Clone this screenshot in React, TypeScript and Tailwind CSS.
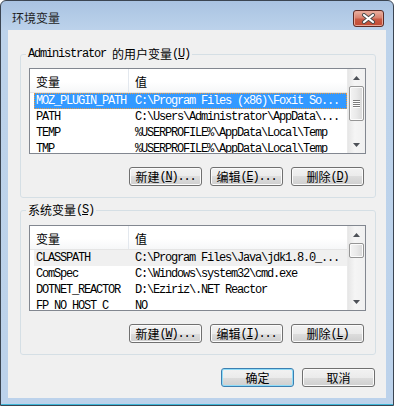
import React from 'react';

const MONO = "font-['Liberation_Mono',monospace] text-[12px] tracking-[-1.2px]";
const CJK = "font-['Noto_Sans_CJK_SC',sans-serif] text-[12px]";

type Row = { name: string; value: string; state?: 'active' | 'inactive' };

const userVars: Row[] = [
  { name: 'MOZ_PLUGIN_PATH', value: 'C:\\Program Files (x86)\\Foxit So...', state: 'active' },
  { name: 'PATH', value: 'C:\\Users\\Administrator\\AppData\\...' },
  { name: 'TEMP', value: '%USERPROFILE%\\AppData\\Local\\Temp' },
  { name: 'TMP', value: '%USERPROFILE%\\AppData\\Local\\Temp' },
];

const systemVars: Row[] = [
  { name: 'CLASSPATH', value: 'C:\\Program Files\\Java\\jdk1.8.0_...', state: 'inactive' },
  { name: 'ComSpec', value: 'C:\\Windows\\system32\\cmd.exe' },
  { name: 'DOTNET_REACTOR', value: 'D:\\Eziriz\\.NET Reactor' },
  { name: 'FP_NO_HOST_C', value: 'NO' },
];

// accelerator label like 新建(N)...
function Label({ cn, hot, dots }: { cn: string; hot: string; dots?: boolean }) {
  return (
    <span className="flex items-center leading-[14px] whitespace-pre">
      <span className={CJK}>{cn}</span>
      <span className={MONO}>
        (<span className="underline underline-offset-[1px]">{hot}</span>){dots ? '...' : ''}
      </span>
    </span>
  );
}

function WinButton({ children, isDefault }: { children: React.ReactNode; isDefault?: boolean }) {
  return (
    <button
      className={`w-[73px] h-[19px] flex items-center justify-center rounded-[3px] border text-black bg-[linear-gradient(#f2f2f2_0%,#ebebeb_50%,#dddddd_50%,#cfcfcf_100%)] ${
        isDefault
          ? 'border-[#3c7fb1] shadow-[inset_0_0_0_1px_#8fdcf8]'
          : 'border-[#707070] shadow-[inset_0_0_0_1px_#fbfbfb]'
      }`}
    >
      {children}
    </button>
  );
}

function Arrow({ down }: { down?: boolean }) {
  return (
    <div className="h-[17px] flex items-center justify-center">
      <svg width="7" height="4" viewBox="0 0 7 4">
        <polygon points={down ? '0,0 7,0 3.5,4' : '0,4 7,4 3.5,0'} fill="#4d5157" />
      </svg>
    </div>
  );
}

function ScrollBar({ thumbH }: { thumbH: number }) {
  return (
    <div className="w-[18px] flex flex-col bg-[linear-gradient(90deg,#e6e6e6,#f5f5f5_40%,#f0f0f0)] border-l border-[#eaeaea]">
      <Arrow />
      <div className="flex-1 px-[1px]">
        {/* thumb */}
        <div
          className="rounded-[2px] border border-[#959595] bg-[linear-gradient(90deg,#f4f4f4,#e9e9e9_50%,#d8d8d8)] shadow-[inset_0_0_0_1px_#fbfbfb] flex flex-col items-center justify-center gap-[1px]"
          style={{ height: thumbH }}
        >
          {thumbH > 20 &&
            [0, 1, 2, 3].map((i) => (
              <div key={i} className="w-[7px] h-[1px] bg-[#7a7a7a] shadow-[0_1px_0_#ffffff]" />
            ))}
        </div>
      </div>
      <Arrow down />
    </div>
  );
}

function VarList({ rows, thumbH }: { rows: Row[]; thumbH: number }) {
  return (
    <div className="w-[337px] h-[86px] border border-[#828790] bg-white flex overflow-hidden">
      <div className="flex-1 flex flex-col overflow-hidden">
        {/* column header */}
        <div className="h-[24px] shrink-0 flex text-black bg-[linear-gradient(#ffffff_0%,#ffffff_55%,#f6f7f8_100%)] border-b border-[#e5e5e5]">
          <div className="w-[99px] pl-[6px] pt-[2px] flex items-center border-r border-[#e3e8ee]">
            <span className={`${CJK} leading-[14px]`}>变量</span>
          </div>
          <div className="pl-[6px] pt-[2px] flex items-center">
            <span className={`${CJK} leading-[14px]`}>值</span>
          </div>
        </div>
        {rows.map((r) => (
          <div key={r.name} className="h-[16px] shrink-0 pl-[4px]">
            <div
              className={`h-[16px] flex items-center whitespace-pre ${MONO} ${
                r.state === 'active'
                  ? 'bg-[#3399ff] text-white border border-dotted border-[#f09a3a]'
                  : r.state === 'inactive'
                  ? 'bg-[#f0f0f0] text-black border border-[#f0f0f0]'
                  : 'text-black border border-transparent'
              }`}
            >
              <span className="w-[100px] pl-[1px] shrink-0">{r.name}</span>
              <span>{r.value}</span>
            </div>
          </div>
        ))}
      </div>
      <ScrollBar thumbH={thumbH} />
    </div>
  );
}

function GroupBox({
  legend,
  rows,
  thumbH,
  buttons,
  className,
  listGap,
}: {
  legend: React.ReactNode;
  rows: Row[];
  thumbH: number;
  buttons: [string, string][];
  className: string;
  listGap: string;
}) {
  return (
    <fieldset className={`w-[356px] rounded-[3px] border border-[#d5dfe5] pb-[11px] ${className}`}>
      <legend className="ml-[5px] px-[2px] h-[14px] leading-[14px] text-black">{legend}</legend>
      <div className={`pl-[8px] ${listGap}`}>
        <VarList rows={rows} thumbH={thumbH} />
        <div className="w-[337px] mt-[13px] pr-[2px] flex justify-end gap-[8px]">
          {buttons.map(([cn, hot], i) => (
            <WinButton key={cn}>
              <Label cn={cn} hot={hot} dots={i < 2} />
            </WinButton>
          ))}
        </div>
      </div>
    </fieldset>
  );
}

export default function App() {
  return (
    <div className="w-[394px] h-[406px] flex flex-col rounded-t-[6px] border border-[#3b4552] bg-[linear-gradient(#a9c3e2_0px,#bdd3eb_30px,#bcd2eb_100%)] overflow-hidden">
      {/* title bar */}
      <div className="h-[29px] shrink-0 pt-[5px] pl-[11px] pr-[9px] flex items-center justify-between">
        <span className={`${CJK} leading-[14px] text-[#1e1e1e]`}>环境变量</span>
        <div className="w-[31px] h-[17px] rounded-[3px] border border-[#5b2b25] bg-[linear-gradient(#e9b3a3_0%,#d9826f_45%,#c95a44_55%,#c24a33_100%)] shadow-[inset_0_0_0_1px_#e7a595] flex items-center justify-center">
          <svg width="15" height="11" viewBox="0 0 15 11">
            <path d="M3 2 L12 9 M12 2 L3 9" stroke="#4a4a4a" strokeWidth="4" strokeLinecap="round" />
            <path d="M3 2 L12 9 M12 2 L3 9" stroke="#ffffff" strokeWidth="2.2" strokeLinecap="round" />
          </svg>
        </div>
      </div>

      {/* client area */}
      <div className="mx-[7px] h-[368px] shrink-0 bg-[#f0f0f0] flex flex-col pl-[12px]">
        <GroupBox
          className="mt-[17px]"
          listGap="mt-[7px]"
          legend={
            <span className="flex items-center whitespace-pre">
              <span className={MONO}>Administrator </span>
              <span className={CJK}>的用户变量</span>
              <span className={MONO}>
                (<span className="underline underline-offset-[1px]">U</span>)
              </span>
            </span>
          }
          rows={userVars}
          thumbH={35}
          buttons={[
            ['新建', 'N'],
            ['编辑', 'E'],
            ['删除', 'D'],
          ]}
        />
        <GroupBox
          className="mt-[5px]"
          listGap="mt-[8px]"
          legend={<Label cn="系统变量" hot="S" />}
          rows={systemVars}
          thumbH={15}
          buttons={[
            ['新建', 'W'],
            ['编辑', 'I'],
            ['删除', 'L'],
          ]}
        />
        <div className="mt-[13px] w-[356px] pr-[1px] flex justify-end gap-[8px]">
          <WinButton isDefault>
            <span className={`${CJK} leading-[14px]`}>确定</span>
          </WinButton>
          <WinButton>
            <span className={`${CJK} leading-[14px]`}>取消</span>
          </WinButton>
        </div>
      </div>

      {/* bottom frame */}
      <div className="flex-1 shadow-[inset_0_-1px_0_#3fb7d8]" />
    </div>
  );
}
